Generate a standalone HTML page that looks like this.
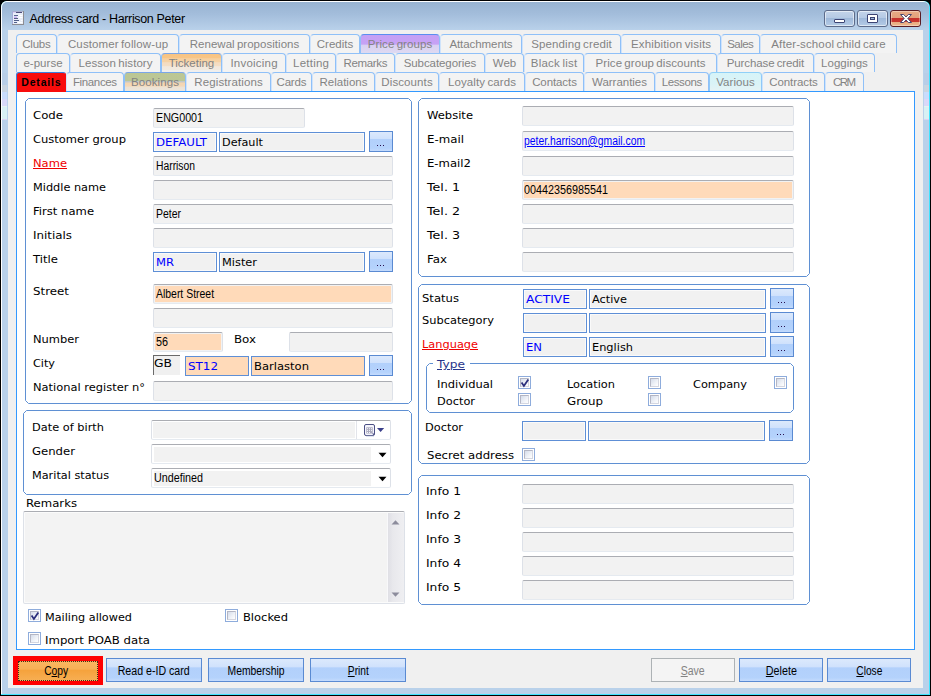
<!DOCTYPE html><html><head><meta charset="utf-8"><title>Address card - Harrison Peter</title><style>
*{box-sizing:border-box;margin:0;padding:0}
html,body{width:931px;height:696px;overflow:hidden;background:#000}
body{position:relative;font-family:"DejaVu Sans","Liberation Sans",sans-serif;font-size:11px;color:#000}
.a{position:absolute}
#win{left:0;top:0;width:931px;height:696px;background:#000;border-radius:7px 7px 0 0;overflow:hidden}
#cy{left:1px;top:1px;width:929px;height:694px;background:#40e4ff;border-radius:6px 6px 0 0}
#hl{left:1px;top:1px;width:928px;height:693px;background:#fff;border-radius:6px 6px 0 0}
#glass{left:2px;top:2px;width:927px;height:692px;border-radius:5px 5px 0 0;background:linear-gradient(#98b3d1 0px,#a3bddb 12px,#b9d1ea 28px,#b9d1ea 100%)}
#client{left:8px;top:30px;width:915px;height:658px;background:#f0f0f0}
#title{left:29.500px;top:10px;height:18px;line-height:18px;font-family:"Liberation Sans",sans-serif;font-size:12.500px;letter-spacing:-.35px;color:#000;white-space:nowrap}
.tab{position:absolute;height:19px;border:1px solid #8fc0f8;border-left-color:#cfe3fb;border-bottom:none;border-radius:4px 4px 0 0;background:#f3f3f3;color:#838383;font-family:"Liberation Sans",sans-serif;font-size:11.500px;text-align:center;line-height:18px;white-space:nowrap;overflow:hidden}
.tab span{display:inline-block;word-spacing:-1px}
#page{left:16px;top:91px;width:899px;height:559px;background:#fff;border:1px solid #3399ff}
.grp{position:absolute;border:1px solid #6393d3;border-radius:4px;background:#fff}
.lb{position:absolute;white-space:nowrap;line-height:14px;height:14px;font-size:11px;color:#000;transform-origin:0 0;transform:scaleX(1.05)}
.red{color:#f00000;text-decoration:underline}
.f{position:absolute;background:#f2f2f2;border:1px solid #dde1e8;border-top-color:#abadb3;border-bottom-color:#e5eaf0;border-radius:2px;white-space:nowrap;overflow:hidden}
.f i{position:absolute;left:1px;top:1px;right:1px;bottom:1px;background:#ffdab9}
.f b,.fb b{position:absolute;font-weight:normal;font-style:normal;left:2px;top:2px;line-height:14px;font-family:"Liberation Sans",sans-serif;font-size:12px;transform-origin:0 50%;transform:scaleX(.9);color:#000}
.fb{position:absolute;background:#f1f1f1;border:1px solid #5e8fd6;box-shadow:inset 0 0 0 1px #fafafa;white-space:nowrap;overflow:hidden}
.fb.o{background:#ffdab9;box-shadow:none}
.fb s{position:absolute;text-decoration:none;left:2px;top:3px;line-height:14px;font-size:11px;color:#000;transform-origin:0 0;transform:scaleX(1.06)}
.fb s.bl{color:#0000ff}
.db{position:absolute;border:1px solid #5a8ad2;background:linear-gradient(#dce9fc 0,#cfe1fc 36%,#b2d0fb 37%,#b4d2fc 85%,#c4dbfd 100%)}
.db u{position:absolute;text-decoration:none;width:1px;height:1px;background:#2a1050;top:13px}
.btn{position:absolute;height:24px;border:1px solid #5a8ad2;background:linear-gradient(#dce9fc 0,#cfe1fc 38%,#b2d0fb 39%,#b4d2fc 85%,#c4dbfd 100%);text-align:center;line-height:24px;font-family:"Liberation Sans",sans-serif;font-size:12px;color:#000;white-space:nowrap}
.btn span{display:inline-block;transform:scaleX(.87)}
.btn u{text-decoration:underline}
.cb{position:absolute;width:13px;height:13px;border:1px solid #8eacdc;background:#fff}
.cb i{position:absolute;left:1px;top:1px;width:9px;height:9px;border:1px solid #b4b6c4;border-right-color:#d4d6e0;border-bottom-color:#d4d6e0;background:linear-gradient(135deg,#d4dcea 0%,#eef1f7 55%,#fff 100%)}
</style></head><body>
<div id="win" class="a"><div id="cy" class="a"></div><div id="hl" class="a"></div><div id="glass" class="a"></div>
<svg class="a" style="left:12px;top:11px" width="12" height="14" viewBox="0 0 12 14"><rect x="0" y="0" width="12" height="14" fill="#8d8d92"/><rect x="0" y="0" width="1" height="13" fill="#a4acd8"/><rect x="1" y="0" width="10" height="1" fill="#a9aecb"/><rect x="1" y="1" width="10" height="12" fill="#e9eef8"/><rect x="4" y="1" width="6" height="1" fill="#4a4a78"/><rect x="1" y="1" width="3" height="1" fill="#d8d0f4"/><rect x="2" y="4" width="4" height="1" fill="#586890"/><rect x="2" y="5.500" width="3" height="1.500" fill="#c8b0f0"/><rect x="2" y="7" width="4" height="1" fill="#505a80"/><rect x="2" y="9" width="5" height="1" fill="#50608c"/><rect x="2" y="11" width="3" height="1" fill="#50608c"/><rect x="6.500" y="4" width="4" height="1" fill="#fff"/><rect x="7" y="6" width="3.500" height="1" fill="#fff"/><rect x="6" y="11" width="4.500" height="1" fill="#fff"/><rect x="9" y="9" width="1.500" height="1" fill="#fff"/></svg>
<div id="title" class="a">Address card - Harrison Peter</div>
<div class="a" style="left:824px;top:10px;width:31px;height:17px;border:1px solid #5c6b8a;border-radius:3px;background:linear-gradient(#c3d4ea 0,#b4c9e4 48%,#9fb9da 50%,#b4cbe6 100%);box-shadow:inset 0 0 0 1px rgba(255,255,255,.55)"><div class="a" style="left:9px;top:8px;width:11px;height:4px;border:1px solid #3c4474;background:#fff;border-radius:1px"></div></div>
<div class="a" style="left:857px;top:10px;width:31px;height:17px;border:1px solid #5c6b8a;border-radius:3px;background:linear-gradient(#c3d4ea 0,#b4c9e4 48%,#9fb9da 50%,#b4cbe6 100%);box-shadow:inset 0 0 0 1px rgba(255,255,255,.55)"><div class="a" style="left:9px;top:3px;width:11px;height:9px;border:1px solid #3c4474;background:#fff;border-radius:1px"><div class="a" style="left:2px;top:2px;width:5px;height:3px;border:1px solid #3c4474;background:#9fb9da"></div></div></div>
<div class="a" style="left:890px;top:10px;width:31px;height:17px;border:1px solid #5a1c24;border-radius:3px;background:linear-gradient(#e8ab86 0,#e3a07c 45%,#c4302c 47%,#c8342e 72%,#e9aa80 76%,#eeb88c 100%);box-shadow:inset 0 0 0 1px rgba(255,255,255,.35)"><svg class="a" style="left:8px;top:2px" width="14" height="11" viewBox="0 0 14 11"><path d="M1.5 1.5h3.2L7 4l2.3-2.5h3.2L8.8 5.5l3.7 4H9.3L7 7 4.700 9.500H1.500L5.200 5.500Z" fill="#fff" stroke="#4a4670" stroke-width="1" stroke-linejoin="round"/></svg></div>
<div class="a" style="left:2px;top:73px;width:5px;height:47px;background:linear-gradient(#b8cee7 0,#b8cee7 12px,#c9d5e1 12px,#c9d5e1 19px,#c8dcfc 19px,#c8dcfc 26px,#d8d8f8 26px,#d8d8f8 33px,#e4f2f2 33px,#e4f2f2 34px,#d8f0f4 34px,#d8f0f4 46px,#dcd4f4 46px)"></div>
<div class="a" style="left:924px;top:73px;width:5px;height:47px;background:linear-gradient(#b8cee7 0,#b8cee7 12px,#c9d5e1 12px,#c9d5e1 19px,#c8dcfc 19px,#c8dcfc 26px,#d8d8f8 26px,#d8d8f8 33px,#e4f2f2 33px,#e4f2f2 34px,#d8f0f4 34px,#d8f0f4 46px,#dcd4f4 46px)"></div>
<div id="client" class="a"></div>
<div class="tab" style="left:16px;top:34px;width:41px;border-left-color:#8fc0f8"><span style="letter-spacing:-0.18px;margin-right:0.18px">Clubs</span></div>
<div class="tab" style="left:57px;top:34px;width:122px;"><span style="letter-spacing:0.12px;margin-right:-0.12px">Customer follow-up</span></div>
<div class="tab" style="left:179px;top:34px;width:131px;"><span style="letter-spacing:0.03px;margin-right:-0.03px">Renewal propositions</span></div>
<div class="tab" style="left:310px;top:34px;width:50px;"><span style="letter-spacing:0.01px;margin-right:-0.01px">Credits</span></div>
<div class="tab" style="left:360px;top:34px;width:80px;background:linear-gradient(#c5a0f5 0,#c6a2f5 50%,#d9d0f3 58%,#dedaf1 100%);border-color:#5a8ef0 #8fc0f8 #8fc0f8 #8fc0f8"><span style="letter-spacing:0.07px;margin-right:-0.07px">Price groups</span></div>
<div class="tab" style="left:440px;top:34px;width:82px;"><span style="letter-spacing:-0.07px;margin-right:0.07px">Attachments</span></div>
<div class="tab" style="left:522px;top:34px;width:99px;"><span style="letter-spacing:0.12px;margin-right:-0.12px">Spending credit</span></div>
<div class="tab" style="left:621px;top:34px;width:100px;"><span style="letter-spacing:0.15px;margin-right:-0.15px">Exhibition visits</span></div>
<div class="tab" style="left:721px;top:34px;width:39px;"><span style="letter-spacing:-0.52px;margin-right:0.52px">Sales</span></div>
<div class="tab" style="left:760px;top:34px;width:137px;"><span style="letter-spacing:0.12px;margin-right:-0.12px">After-school child care</span></div>
<div class="tab" style="left:16px;top:53px;width:54px;border-left-color:#8fc0f8"><span style="letter-spacing:0.04px;margin-right:-0.04px">e-purse</span></div>
<div class="tab" style="left:70px;top:53px;width:91px;"><span style="letter-spacing:0.07px;margin-right:-0.07px">Lesson history</span></div>
<div class="tab" style="left:161px;top:53px;width:61px;background:linear-gradient(#f8c483 0,#f8c586 22%,#f6d0a0 26%,#f6d2a4 44%,#f4dcc0 48%,#f4dec4 66%,#f2e8dc 70%,#f1eae0 88%,#f0efee 92%);border-color:#7aa6e8 #8fc0f8 #8fc0f8 #8fc0f8"><span style="letter-spacing:-0.01px;margin-right:0.01px">Ticketing</span></div>
<div class="tab" style="left:222px;top:53px;width:64px;"><span style="letter-spacing:0.23px;margin-right:-0.23px">Invoicing</span></div>
<div class="tab" style="left:286px;top:53px;width:50px;"><span style="letter-spacing:0.25px;margin-right:-0.25px">Letting</span></div>
<div class="tab" style="left:336px;top:53px;width:59px;"><span style="letter-spacing:-0.33px;margin-right:0.33px">Remarks</span></div>
<div class="tab" style="left:395px;top:53px;width:90px;"><span style="letter-spacing:-0.07px;margin-right:0.07px">Subcategories</span></div>
<div class="tab" style="left:485px;top:53px;width:39px;"><span style="letter-spacing:-0.07px;margin-right:0.07px">Web</span></div>
<div class="tab" style="left:524px;top:53px;width:60px;"><span style="letter-spacing:0.24px;margin-right:-0.24px">Black list</span></div>
<div class="tab" style="left:584px;top:53px;width:133px;"><span style="letter-spacing:0.06px;margin-right:-0.06px">Price group discounts</span></div>
<div class="tab" style="left:717px;top:53px;width:97px;"><span style="letter-spacing:-0.10px;margin-right:0.10px">Purchase credit</span></div>
<div class="tab" style="left:814px;top:53px;width:61px;"><span style="letter-spacing:0.01px;margin-right:-0.01px">Loggings</span></div>
<div class="tab" style="left:16px;top:72px;width:50px;background:#f80c0c;color:#000;font-weight:bold;font-size:10.500px;border-color:#3a7fe0 #f80c0c #f80c0c #3a7fe0;border-radius:3px 3px 0 0;line-height:19px"><span style="letter-spacing:0.82px;margin-right:-0.82px">Details</span></div>
<div class="tab" style="left:66px;top:72px;width:58px;"><span style="letter-spacing:-0.37px;margin-right:0.37px">Finances</span></div>
<div class="tab" style="left:124px;top:72px;width:62px;background:linear-gradient(#bcc794 0,#bbc696 42%,#c2c9c8 47%,#c2c9c8 50%,#f5d5b0 55%,#f3d8b8 72%,#ece2d4 80%,#ebe5dc 100%);border-color:#7aa6e8 #8fc0f8 #8fc0f8 #8fc0f8"><span style="letter-spacing:0.10px;margin-right:-0.10px">Bookings</span></div>
<div class="tab" style="left:186px;top:72px;width:85px;"><span style="letter-spacing:0.10px;margin-right:-0.10px">Registrations</span></div>
<div class="tab" style="left:271px;top:72px;width:41px;"><span style="letter-spacing:-0.17px;margin-right:0.17px">Cards</span></div>
<div class="tab" style="left:312px;top:72px;width:63px;"><span style="letter-spacing:0.01px;margin-right:-0.01px">Relations</span></div>
<div class="tab" style="left:375px;top:72px;width:64px;"><span style="letter-spacing:0.10px;margin-right:-0.10px">Discounts</span></div>
<div class="tab" style="left:439px;top:72px;width:86px;"><span style="letter-spacing:0.09px;margin-right:-0.09px">Loyalty cards</span></div>
<div class="tab" style="left:525px;top:72px;width:59px;"><span style="letter-spacing:-0.09px;margin-right:0.09px">Contacts</span></div>
<div class="tab" style="left:584px;top:72px;width:71px;"><span style="letter-spacing:-0.02px;margin-right:0.02px">Warranties</span></div>
<div class="tab" style="left:655px;top:72px;width:54px;"><span style="letter-spacing:-0.39px;margin-right:0.39px">Lessons</span></div>
<div class="tab" style="left:709px;top:72px;width:53px;background:linear-gradient(#d6f4f8 0,#daf3f7 60%,#e6f3f5 100%);border-color:#8fd0f8 #8fc8f8 #8fc8f8"><span style="letter-spacing:0.10px;margin-right:-0.10px">Various</span></div>
<div class="tab" style="left:762px;top:72px;width:63px;"><span style="letter-spacing:-0.09px;margin-right:0.09px">Contracts</span></div>
<div class="tab" style="left:825px;top:72px;width:39px;"><span style="letter-spacing:-1.60px;margin-right:1.60px">CRM</span></div>
<div id="page" class="a"></div>
<div class="a" style="left:17px;top:91px;width:49px;height:1px;background:#f80c0c"></div>
<svg class="a" style="left:25px;top:98px" width="387" height="306"><path d="M3.5 .5H383.5L386.5 3.5V302.5L383.5 305.5H3.5L.5 302.5V3.5Z" fill="#fff" stroke="#5f90d3"/></svg>
<svg class="a" style="left:23px;top:410px" width="389" height="85"><path d="M3.5 .5H385.5L388.5 3.5V81.5L385.5 84.5H3.5L.5 81.5V3.5Z" fill="#fff" stroke="#5f90d3"/></svg>
<svg class="a" style="left:418px;top:98px" width="392" height="179"><path d="M3.5 .5H388.5L391.5 3.5V175.5L388.5 178.5H3.5L.5 175.5V3.5Z" fill="#fff" stroke="#5f90d3"/></svg>
<svg class="a" style="left:418px;top:284px" width="392" height="180"><path d="M3.5 .5H388.5L391.5 3.5V176.5L388.5 179.5H3.5L.5 176.5V3.5Z" fill="#fff" stroke="#5f90d3"/></svg>
<svg class="a" style="left:418px;top:475px" width="392" height="130"><path d="M3.5 .5H388.5L391.5 3.5V126.5L388.5 129.5H3.5L.5 126.5V3.5Z" fill="#fff" stroke="#5f90d3"/></svg>
<div class="lb " style="left:32.8px;top:109px;transform:scaleX(1.065);">Code</div>
<div class="f" style="left:153px;top:108px;width:152px;height:20px"><b style="transform:scaleX(0.892)">ENG0001</b></div>
<div class="lb " style="left:32.8px;top:133px;transform:scaleX(1.046);">Customer group</div>
<div class="fb" style="left:153px;top:132px;width:64px;height:20px"><s class="bl" style="transform:scaleX(1.071)">DEFAULT</s></div>
<div class="fb" style="left:219px;top:132px;width:146px;height:20px"><s class="" style="transform:scaleX(1.020)">Default</s></div>
<div class="db" style="left:369px;top:131px;width:24px;height:21px"><u style="left:7px"></u><u style="left:10px"></u><u style="left:13px"></u></div>
<div class="lb red" style="left:32.8px;top:157px;transform:scaleX(1.048);">Name</div>
<div class="f" style="left:153px;top:156px;width:240px;height:20px"><b style="transform:scaleX(0.860)">Harrison</b></div>
<div class="lb " style="left:32.8px;top:181px;transform:scaleX(1.028);">Middle name</div>
<div class="f" style="left:153px;top:180px;width:240px;height:20px"></div>
<div class="lb " style="left:32.8px;top:205px;transform:scaleX(1.055);">First name</div>
<div class="f" style="left:153px;top:204px;width:240px;height:20px"><b style="transform:scaleX(0.872)">Peter</b></div>
<div class="lb " style="left:32.8px;top:229px;transform:scaleX(1.078);">Initials</div>
<div class="f" style="left:153px;top:228px;width:240px;height:20px"></div>
<div class="lb " style="left:32.8px;top:253px;transform:scaleX(1.060);">Title</div>
<div class="fb" style="left:153px;top:252px;width:64px;height:20px"><s class="bl" style="transform:scaleX(1.051)">MR</s></div>
<div class="fb" style="left:219px;top:252px;width:146px;height:20px"><s class="" style="transform:scaleX(1.033)">Mister</s></div>
<div class="db" style="left:369px;top:251px;width:24px;height:21px"><u style="left:7px"></u><u style="left:10px"></u><u style="left:13px"></u></div>
<div class="lb " style="left:32.8px;top:285px;transform:scaleX(1.077);">Street</div>
<div class="f" style="left:153px;top:284px;width:240px;height:20px"><i></i><b style="transform:scaleX(0.870)">Albert Street</b></div>
<div class="f" style="left:153px;top:308px;width:240px;height:20px"></div>
<div class="lb " style="left:32.8px;top:333px;transform:scaleX(1.041);">Number</div>
<div class="f" style="left:153px;top:332px;width:70px;height:20px"><i></i><b style="transform:scaleX(0.899)">56</b></div>
<div class="lb " style="left:233.8px;top:333px;transform:scaleX(1.076);">Box</div>
<div class="f" style="left:289px;top:332px;width:104px;height:20px"></div>
<div class="lb " style="left:32.8px;top:357px;transform:scaleX(1.020);">City</div>
<div class="a" style="left:153px;top:355px;width:27px;height:20px;background:#f0f0f0;border-top:1px solid #6a6a6a;border-left:1px solid #6a6a6a"></div>
<div class="lb " style="left:153.8px;top:357px;transform:scaleX(1.120);">GB</div>
<div class="fb o" style="left:185px;top:356px;width:64px;height:20px"><s class="bl" style="transform:scaleX(1.083)">ST12</s></div>
<div class="fb o" style="left:251px;top:356px;width:114px;height:20px"><s class="" style="transform:scaleX(1.051)">Barlaston</s></div>
<div class="db" style="left:369px;top:355px;width:24px;height:21px"><u style="left:7px"></u><u style="left:10px"></u><u style="left:13px"></u></div>
<div class="lb " style="left:32.8px;top:381px;transform:scaleX(1.040);">National register n°</div>
<div class="f" style="left:153px;top:381px;width:240px;height:20px"></div>
<div class="lb " style="left:31.8px;top:421px;transform:scaleX(1.032);">Date of birth</div>
<div class="f" style="left:151px;top:420px;width:240px;height:20px;background:#fff"><div class="a" style="left:1px;top:1px;width:202px;height:16px;background:#f2f2f2"></div><div class="a" style="left:204px;top:0;width:1px;height:18px;background:#e2e4ea"></div></div>
<svg class="a" style="left:364px;top:424px" width="21" height="13" viewBox="0 0 21 13"><rect x=".5" y=".5" width="10" height="11" rx="1.500" fill="#f5f5fc" stroke="#4b4f84"/><rect x="2.300" y="3.300" width="6.400" height="6.200" fill="#a9a9bd"/><g fill="#f4f4fa"><rect x="3" y="4.200" width="1" height="1"/><rect x="5" y="4.200" width="1" height="1"/><rect x="7" y="4.200" width="1" height="1"/><rect x="3" y="6.100" width="1" height="1"/><rect x="5" y="6.100" width="1" height="1"/><rect x="7" y="6.100" width="1" height="1"/><rect x="3" y="8" width="1" height="1"/><rect x="5" y="8" width="1" height="1"/></g><path d="M8 9.500h2v2Z" fill="#4b4f84"/><path d="M2 12.200h8" stroke="#c8d0e4" stroke-width=".8"/><path d="M13 4h7.200L16.600 8.100Z" fill="#3a3f8a"/></svg>
<div class="lb " style="left:31.8px;top:445px;transform:scaleX(1.061);">Gender</div>
<div class="f" style="left:151px;top:444px;width:240px;height:20px;background:#fff"><div class="a" style="left:2px;top:2px;width:217px;height:15px;background:#f2f2f2"></div></div>
<svg class="a" style="left:378px;top:452px" width="9" height="6" viewBox="0 0 9 6"><path d="M.5 .8h8L4.500 5.200Z" fill="#000"/></svg>
<div class="lb " style="left:31.8px;top:469px;transform:scaleX(1.024);">Marital status</div>
<div class="f" style="left:151px;top:468px;width:240px;height:20px;background:#fff"><div class="a" style="left:2px;top:2px;width:217px;height:15px;background:#f2f2f2"></div><b style="transform:scaleX(0.896)">Undefined</b></div>
<svg class="a" style="left:378px;top:476px" width="9" height="6" viewBox="0 0 9 6"><path d="M.5 .8h8L4.500 5.200Z" fill="#000"/></svg>
<div class="lb " style="left:25.8px;top:497px;transform:scaleX(1.063);">Remarks</div>
<div class="a" style="left:23px;top:511px;width:382px;height:93px;background:#f3f3f3;border:1px solid #dde1e8;border-top-color:#abadb3;border-radius:2px;box-shadow:inset 0 0 0 1px #fbfbfb"><div class="a" style="left:363px;top:1px;width:17px;height:89px;background:linear-gradient(90deg,#dfdfe5 0,#e8e8ec 30%,#efeff2 100%);border-left:1px solid #f8f8fa"></div></div>
<svg class="a" style="left:391px;top:520px" width="9" height="5" viewBox="0 0 9 5"><path d="M4.500 .3 8.500 4.500H.5Z" fill="#8c8c9c"/></svg>
<svg class="a" style="left:391px;top:592px" width="9" height="5" viewBox="0 0 9 5"><path d="M4.500 4.700 8.500 .5H.5Z" fill="#8c8c9c"/></svg>
<div class="cb" style="left:28px;top:609px"><i></i><svg class="a" style="left:1px;top:1px" width="10" height="10" viewBox="0 0 10 10"><path d="M1.6 4.6 3.900 8 8.300 1.400" fill="none" stroke="#2b2f7c" stroke-width="1.800"/></svg></div>
<div class="lb " style="left:45.3px;top:611px;transform:scaleX(1.021);">Mailing allowed</div>
<div class="cb" style="left:225px;top:609px"><i></i></div>
<div class="lb " style="left:242.8px;top:611px;transform:scaleX(1.043);">Blocked</div>
<div class="cb" style="left:28px;top:632px"><i></i></div>
<div class="lb " style="left:45.3px;top:634px;transform:scaleX(1.066);">Import POAB data</div>
<div class="lb " style="left:426.8px;top:109px;transform:scaleX(1.049);">Website</div>
<div class="f" style="left:522px;top:106px;width:272px;height:20px"></div>
<div class="lb " style="left:426.8px;top:133px;transform:scaleX(1.072);">E-mail</div>
<div class="f" style="left:522px;top:131px;width:272px;height:20px"><b style="color:#0000ff;text-decoration:underline;left:1px;transform:scaleX(0.863)">peter.harrison@gmail.com</b></div>
<div class="lb " style="left:426.8px;top:157px;transform:scaleX(1.060);">E-mail2</div>
<div class="f" style="left:522px;top:156px;width:272px;height:20px"></div>
<div class="lb " style="left:426.8px;top:181px;transform:scaleX(1.151);">Tel. 1</div>
<div class="f" style="left:522px;top:180px;width:272px;height:20px"><i></i><b style="transform:scaleX(0.899);left:1px">00442356985541</b></div>
<div class="lb " style="left:426.8px;top:205px;transform:scaleX(1.151);">Tel. 2</div>
<div class="f" style="left:522px;top:204px;width:272px;height:20px"></div>
<div class="lb " style="left:426.8px;top:229px;transform:scaleX(1.151);">Tel. 3</div>
<div class="f" style="left:522px;top:228px;width:272px;height:20px"></div>
<div class="lb " style="left:426.8px;top:253px;transform:scaleX(1.077);">Fax</div>
<div class="f" style="left:522px;top:252px;width:272px;height:20px"></div>
<div class="lb " style="left:421.8px;top:292px;transform:scaleX(1.056);">Status</div>
<div class="fb" style="left:523px;top:289px;width:64px;height:20px"><s class="bl" style="transform:scaleX(1.114)">ACTIVE</s></div>
<div class="fb" style="left:589px;top:289px;width:177px;height:20px"><s class="" style="transform:scaleX(1.028)">Active</s></div>
<div class="db" style="left:770px;top:288px;width:24px;height:21px"><u style="left:7px"></u><u style="left:10px"></u><u style="left:13px"></u></div>
<div class="lb " style="left:421.8px;top:314px;transform:scaleX(1.035);">Subcategory</div>
<div class="fb" style="left:523px;top:313px;width:64px;height:20px"></div>
<div class="fb" style="left:589px;top:313px;width:177px;height:20px"></div>
<div class="db" style="left:770px;top:312px;width:24px;height:21px"><u style="left:7px"></u><u style="left:10px"></u><u style="left:13px"></u></div>
<div class="lb red" style="left:421.8px;top:338px;transform:scaleX(1.032);">Language</div>
<div class="fb" style="left:523px;top:337px;width:64px;height:20px"><s class="bl" style="transform:scaleX(1.053)">EN</s></div>
<div class="fb" style="left:589px;top:337px;width:177px;height:20px"><s class="" style="transform:scaleX(1.032)">English</s></div>
<div class="db" style="left:770px;top:336px;width:24px;height:21px"><u style="left:7px"></u><u style="left:10px"></u><u style="left:13px"></u></div>
<svg class="a" style="left:426px;top:363px" width="368" height="50"><path d="M3.5 .5H364.5L367.5 3.5V46.5L364.5 49.5H3.5L.5 46.5V3.5Z" fill="#fff" stroke="#5f90d3"/></svg>
<div class="a" style="left:433px;top:360px;width:37px;height:8px;background:#fff"></div>
<div class="lb " style="left:436.8px;top:358px;transform:scaleX(1.108);color:#28348a;text-decoration:underline">Type</div>
<div class="lb " style="left:436.8px;top:378px;transform:scaleX(1.045);">Individual</div>
<div class="cb" style="left:518px;top:376px"><i></i><svg class="a" style="left:1px;top:1px" width="10" height="10" viewBox="0 0 10 10"><path d="M1.6 4.6 3.900 8 8.300 1.400" fill="none" stroke="#2b2f7c" stroke-width="1.800"/></svg></div>
<div class="lb " style="left:566.8px;top:378px;transform:scaleX(1.032);">Location</div>
<div class="cb" style="left:648px;top:376px"><i></i></div>
<div class="lb " style="left:692.8px;top:378px;transform:scaleX(1.032);">Company</div>
<div class="cb" style="left:774px;top:376px"><i></i></div>
<div class="lb " style="left:436.8px;top:395px;transform:scaleX(1.032);">Doctor</div>
<div class="cb" style="left:518px;top:393px"><i></i></div>
<div class="lb " style="left:566.8px;top:395px;transform:scaleX(1.075);">Group</div>
<div class="cb" style="left:648px;top:393px"><i></i></div>
<div class="lb " style="left:424.8px;top:421px;transform:scaleX(1.032);">Doctor</div>
<div class="fb" style="left:522px;top:421px;width:64px;height:20px"></div>
<div class="fb" style="left:588px;top:421px;width:177px;height:20px"></div>
<div class="db" style="left:769px;top:420px;width:24px;height:21px"><u style="left:7px"></u><u style="left:10px"></u><u style="left:13px"></u></div>
<div class="lb " style="left:426.8px;top:448.5px;transform:scaleX(1.063);">Secret address</div>
<div class="cb" style="left:522px;top:448px"><i></i></div>
<div class="lb " style="left:425.8px;top:485px;transform:scaleX(1.117);">Info 1</div>
<div class="f" style="left:522px;top:484px;width:272px;height:20px"></div>
<div class="lb " style="left:425.8px;top:509px;transform:scaleX(1.117);">Info 2</div>
<div class="f" style="left:522px;top:508px;width:272px;height:20px"></div>
<div class="lb " style="left:425.8px;top:533px;transform:scaleX(1.117);">Info 3</div>
<div class="f" style="left:522px;top:532px;width:272px;height:20px"></div>
<div class="lb " style="left:425.8px;top:557px;transform:scaleX(1.117);">Info 4</div>
<div class="f" style="left:522px;top:556px;width:272px;height:20px"></div>
<div class="lb " style="left:425.8px;top:581px;transform:scaleX(1.117);">Info 5</div>
<div class="f" style="left:522px;top:580px;width:272px;height:20px"></div>
<div class="a" style="left:13px;top:656px;width:90px;height:29px;background:#ff0000"></div>
<div class="btn" style="left:18px;top:661px;width:80px;height:20px;line-height:18px;text-indent:-2px;border:1px dotted #3a3020;background:linear-gradient(#f9b561 0,#f8b055 40%,#f5a23c 45%,#f7ae52 100%)"><span style="transform:scaleX(0.857)">C<u>o</u>py</span></div>
<div class="btn" style="left:106px;top:658px;width:96px;"><span style="transform:scaleX(0.885)">Read e-ID card</span></div>
<div class="btn" style="left:208px;top:658px;width:96px;"><span style="transform:scaleX(0.863)">Membership</span></div>
<div class="btn" style="left:310px;top:658px;width:96px;"><span style="transform:scaleX(0.851)"><u>P</u>rint</span></div>
<div class="btn" style="left:651px;top:658px;width:84px;background:#f4f4f4;border-color:#adb2b5;color:#838383;"><span style="transform:scaleX(0.878)"><u>S</u>ave</span></div>
<div class="btn" style="left:739px;top:658px;width:84px;"><span style="transform:scaleX(0.894)"><u>D</u>elete</span></div>
<div class="btn" style="left:827px;top:658px;width:84px;"><span style="transform:scaleX(0.847)"><u>C</u>lose</span></div>
</div></body></html>
